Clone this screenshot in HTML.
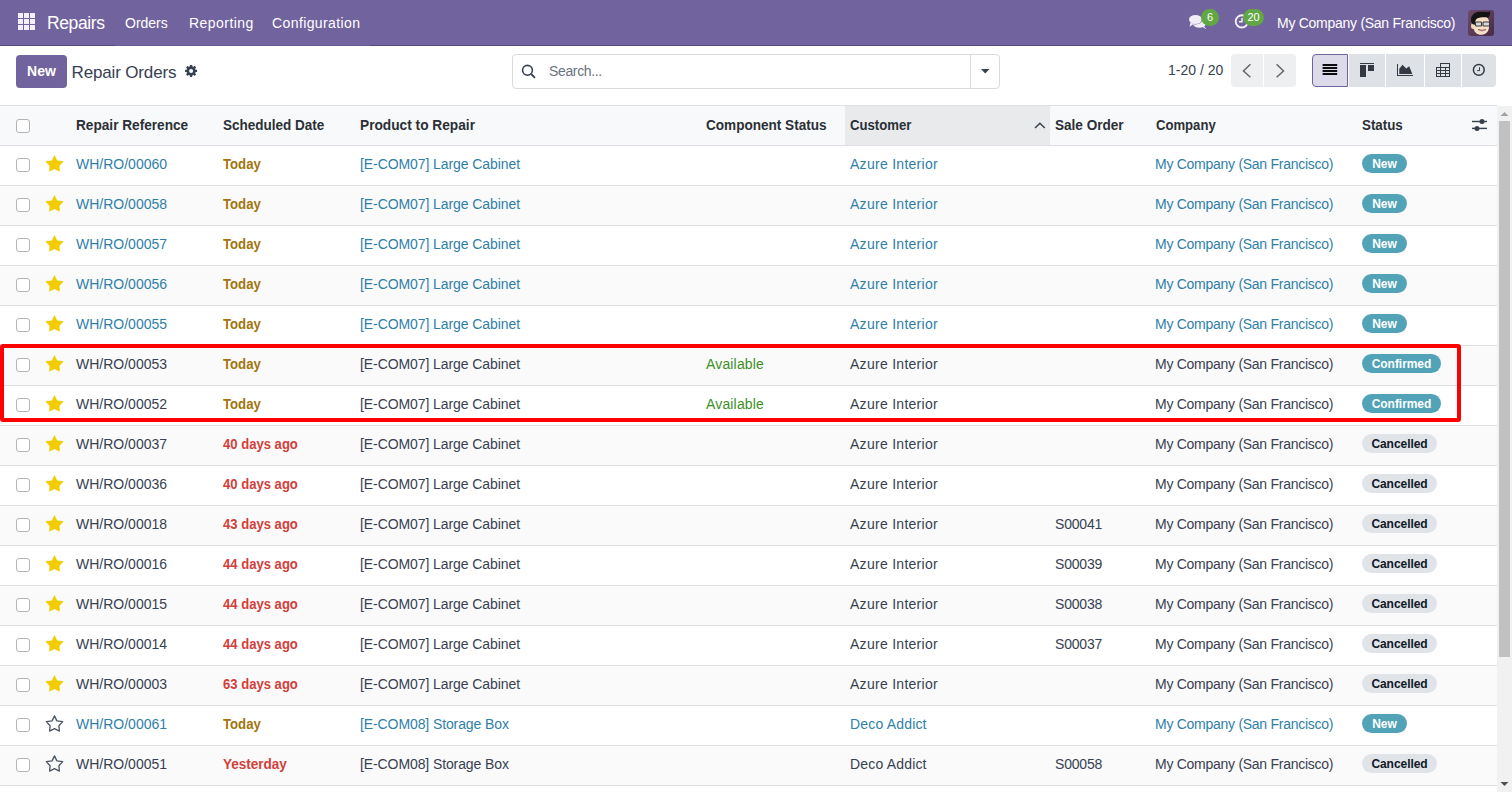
<!DOCTYPE html>
<html><head><meta charset="utf-8">
<style>
*{box-sizing:border-box;margin:0;padding:0}
html,body{width:1512px;height:792px;overflow:hidden;background:#fff;font-family:"Liberation Sans",sans-serif;font-size:14px;color:#374151}
.abs{position:absolute}
svg{display:block}
#nav{position:absolute;left:0;top:0;width:1512px;height:46px;background:#71639e;color:#fff}
#nav .line{position:absolute;top:45px;height:1px;background:#56497c}
#nav .t{position:absolute;white-space:nowrap;line-height:1}
.btnnew{position:absolute;left:16px;top:55px;width:51px;height:33px;background:#71639e;border-radius:4px;color:#fff;font-weight:bold;font-size:14px;text-align:center;line-height:33px}
.title{position:absolute;left:71.5px;top:63px;letter-spacing:-0.15px;font-size:17px;color:#374151;white-space:nowrap;line-height:1.2}
.search{position:absolute;left:512px;top:54px;width:488px;height:35px;border:1px solid #d8dadd;border-radius:4px}
.search .div{position:absolute;left:457px;top:0;width:1px;height:33px;background:#d8dadd}
.ph{position:absolute;left:36px;top:8px;color:#6b7280;font-size:14px;line-height:17px;letter-spacing:-0.35px}
.pager{position:absolute;left:1168px;top:62px;font-size:14px;color:#374151;line-height:17px;white-space:nowrap}
.pbtn{position:absolute;top:54px;height:33px;background:#eeeff1}
.vbtn{position:absolute;top:54px;height:33px;background:#dee1e6}
#thead{position:absolute;left:0;top:105px;width:1497px;height:41px;background:#f8f9fa;border-top:1px solid #dee2e6;border-bottom:1px solid #dee2e6}
.th{position:absolute;top:11px;font-weight:bold;color:#2b3036;white-space:nowrap;line-height:17px;font-size:14px;transform-origin:0 50%}
.row{position:absolute;left:0;width:1497px;height:40px;background:#fff;border-bottom:1px solid #dee2e6}
.row.alt{background:#fafafa}
.row .c{position:absolute;top:10px;white-space:nowrap;line-height:17px}
.row.info .c{color:#2f7fa9}
.row .c.date{font-weight:bold;transform-origin:0 50%}
.row .c.w{color:#a2760c}
.row .c.d{color:#d2403a}
.row .c.ok{color:#3e8f28}
.cb{position:absolute;left:16px;top:12px;width:14px;height:14px;border:1px solid #b1b5ba;border-radius:3px;background:#fff}
.star{position:absolute;left:45px;top:8px;width:20px;height:20px}
.bw{position:absolute;top:8px}
.badge{display:block;height:19px;border-radius:10px;font-weight:bold;font-size:12px;line-height:20px;text-align:center;letter-spacing:-0.05px}
.bi{background:#52a3b8;color:#fff}
.bc{background:#e0e3e7;color:#111827}
#scroll{position:absolute;left:1497px;top:106px;width:15px;height:686px;background:#f1f1f1}
#thumb{position:absolute;left:1499px;top:121px;width:11px;height:536px;background:#c1c1c1}
#redbox{position:absolute;left:0;top:344px;width:1461px;height:78px;border:4px solid #ff0000;border-radius:3px}
.nbadge{position:absolute;height:17px;border-radius:9px;background:#62a744;color:#fff;font-size:11px;line-height:17px;text-align:center}
</style></head><body>
<div id="nav">
  <svg class="abs" style="left:18px;top:13px" width="18" height="18" viewBox="0 0 18 18" fill="#f3f0fa">
    <rect x="0" y="0" width="5" height="5"/><rect x="6" y="0" width="5" height="5"/><rect x="12" y="0" width="5" height="5"/>
    <rect x="0" y="6" width="5" height="5"/><rect x="6" y="6" width="5" height="5"/><rect x="12" y="6" width="5" height="5"/>
    <rect x="0" y="12" width="5" height="5"/><rect x="6" y="12" width="5" height="5"/><rect x="12" y="12" width="5" height="5"/>
  </svg>
  <span class="t" style="left:47px;top:14.5px;font-size:17.5px;letter-spacing:-0.4px">Repairs</span>
  <span class="t" style="left:125px;top:16px">Orders</span>
  <span class="t" style="left:189px;top:16px;letter-spacing:0.45px">Reporting</span>
  <span class="t" style="left:272px;top:16px;letter-spacing:0.4px">Configuration</span>
  <!-- chat icon -->
  <svg class="abs" style="left:1188px;top:13px" width="20" height="18" viewBox="0 0 20 18">
    <ellipse cx="11.5" cy="10.5" rx="6.5" ry="4.3" fill="#f0edf7"/>
    <path d="M14 13.5 L18.5 16.5 L15.5 12.5 Z" fill="#f0edf7"/>
    <ellipse cx="7.5" cy="6.5" rx="7" ry="5" fill="#71639e"/>
    <ellipse cx="7.5" cy="6.5" rx="6.5" ry="4.6" fill="#f0edf7"/>
    <path d="M2.5 9.5 L1.5 13.8 L6 10.8 Z" fill="#f0edf7"/>
  </svg>
  <div class="nbadge" style="left:1201px;top:9px;width:18px">6</div>
  <!-- clock -->
  <svg class="abs" style="left:1234px;top:14px" width="16" height="16" viewBox="0 0 16 16">
    <circle cx="7.8" cy="7.4" r="6.1" fill="none" stroke="#f3f0fa" stroke-width="1.9"/>
    <path d="M8 4 V7.8 H5" fill="none" stroke="#f3f0fa" stroke-width="1.5"/>
  </svg>
  <div class="nbadge" style="left:1243px;top:9px;width:21px">20</div>
  <span class="t" style="left:1277px;top:16px;letter-spacing:-0.27px">My Company (San Francisco)</span>
  <!-- avatar -->
  <svg class="abs" style="left:1468px;top:10px" width="26" height="26" viewBox="0 0 26 26">
    <defs><linearGradient id="ag" x1="0" y1="0" x2="1" y2="1"><stop offset="0" stop-color="#6d4b69"/><stop offset="1" stop-color="#482b45"/></linearGradient></defs>
    <rect x="0" y="0" width="26" height="26" rx="3" fill="url(#ag)"/>
    <ellipse cx="5" cy="16" rx="2" ry="3" fill="#f2d6bb"/>
    <path d="M5.5 11 C5.5 7 9 6 13 6 C18 6 21 8 21 12 L21 17 C21 22 17 24.8 13 24.8 C9 24.8 5.5 22 5.5 17 Z" fill="#f6dfc6"/>
    <path d="M3 10 C3 4 8 1.5 13 1.8 C17 1.8 20 2.5 22 1.5 C22.5 4 21.5 6.5 20 7.5 C16 7 12 7.2 9 8.5 C7.5 9.5 7 12 6.8 15 L4.5 14 C3.5 12.5 3 11 3 10 Z" fill="#141414"/>
    <rect x="7.5" y="12" width="6" height="4" rx="0.8" fill="#d8d8d8" stroke="#3a3a3a" stroke-width="1.1"/>
    <rect x="15" y="12" width="6.5" height="4" rx="0.8" fill="#d8d8d8" stroke="#3a3a3a" stroke-width="1.1"/>
    <path d="M10 19.5 Q14 22.5 18 19.5 Q14 21 10 19.5 Z" fill="#fff" stroke="#8a4a4a" stroke-width="0.7"/>
  </svg>
  <div class="line" style="left:0;width:115px"></div>
  <div class="line" style="left:115px;width:255px;background:#6a5b98"></div>
  <div class="line" style="left:370px;width:1142px"></div>
</div>

<div class="btnnew">New</div>
<div class="title">Repair Orders</div>
<!-- gear -->
<svg class="abs" style="left:184px;top:64px" width="14" height="14" viewBox="0 0 14 14">
  <g fill="#374151" transform="translate(7.1,6.9)">
    <circle r="4.6"/>
    <rect x="-1.2" y="-6" width="2.4" height="12" rx="0.3"/>
    <rect x="-1.2" y="-6" width="2.4" height="12" rx="0.3" transform="rotate(45)"/>
    <rect x="-1.2" y="-6" width="2.4" height="12" rx="0.3" transform="rotate(90)"/>
    <rect x="-1.2" y="-6" width="2.4" height="12" rx="0.3" transform="rotate(135)"/>
    <circle r="2" fill="#fff"/>
  </g>
</svg>

<div class="search">
  <svg class="abs" style="left:8px;top:9px" width="16" height="16" viewBox="0 0 16 16">
    <circle cx="6.5" cy="6.3" r="4.9" fill="none" stroke="#374151" stroke-width="1.6"/>
    <path d="M10.2 10 L14 13.9" stroke="#374151" stroke-width="1.8"/>
  </svg>
  <div class="ph">Search...</div>
  <div class="div"></div>
  <svg class="abs" style="left:468px;top:14px" width="9" height="5" viewBox="0 0 9 5"><path d="M0 0 H8.5 L4.25 4.6 Z" fill="#374151"/></svg>
</div>

<div class="pager">1-20 / 20</div>
<div class="pbtn" style="left:1231px;width:32px;border-radius:4px 0 0 4px"></div>
<div class="pbtn" style="left:1264px;width:32px;border-radius:0 4px 4px 0"></div>
<svg class="abs" style="left:1242px;top:63px" width="10" height="16" viewBox="0 0 10 16"><path d="M8.4 1.3 L1.5 8 L8.4 14.3" fill="none" stroke="#666" stroke-width="1.5"/></svg>
<svg class="abs" style="left:1275px;top:63px" width="10" height="16" viewBox="0 0 10 16"><path d="M1.6 1.3 L8.5 8 L1.6 14.3" fill="none" stroke="#666" stroke-width="1.5"/></svg>

<div class="vbtn" style="left:1312px;width:36px;border-radius:4px 0 0 4px;background:#dddaea;border:1px solid #71639e"></div>
<div class="vbtn" style="left:1349px;width:36px"></div>
<div class="vbtn" style="left:1386px;width:38px"></div>
<div class="vbtn" style="left:1425px;width:36px"></div>
<div class="vbtn" style="left:1462px;width:34px;border-radius:0 4px 4px 0"></div>
<!-- list icon -->
<svg class="abs" style="left:1322px;top:64px" width="16" height="12" viewBox="0 0 16 12" fill="#0d0d0d">
  <rect x="0.6" y="0" width="14.6" height="2"/><rect x="0.6" y="3" width="14.6" height="2"/><rect x="0.6" y="6" width="14.6" height="2"/><rect x="0.6" y="9" width="14.6" height="2"/>
</svg>
<!-- kanban -->
<svg class="abs" style="left:1360px;top:62px" width="15" height="16" viewBox="0 0 15 16" fill="#333a44">
  <rect x="0" y="1" width="14" height="1"/><rect x="0" y="3" width="6" height="12"/><rect x="8" y="3" width="6" height="6"/>
</svg>
<!-- graph -->
<svg class="abs" style="left:1396px;top:63px" width="18" height="14" viewBox="0 0 18 14" fill="#333a44">
  <rect x="1" y="1" width="1" height="12"/><rect x="1" y="12" width="16" height="1"/>
  <path d="M3.3 11 L3.3 5.8 L6.5 1.8 L10.2 5.5 L13.2 3.3 L16.3 11 Z"/>
</svg>
<!-- pivot -->
<svg class="abs" style="left:1435px;top:62px" width="16" height="16" viewBox="0 0 16 16" fill="#333a44">
  <rect x="5" y="1" width="10" height="1"/>
  <rect x="1" y="5" width="14" height="1"/><rect x="1" y="8" width="14" height="1"/><rect x="1" y="11" width="14" height="1"/><rect x="1" y="14" width="14" height="1"/>
  <rect x="1" y="5" width="1" height="10"/><rect x="5" y="1" width="1" height="14"/><rect x="10" y="5" width="1" height="10"/><rect x="14" y="1" width="1" height="14"/>
</svg>
<!-- activity clock -->
<svg class="abs" style="left:1471px;top:62px" width="16" height="16" viewBox="0 0 16 16">
  <circle cx="7.8" cy="7.9" r="5.4" fill="none" stroke="#333a44" stroke-width="1.5"/>
  <path d="M8.5 5.3 V8.6 H6.1" fill="none" stroke="#333a44" stroke-width="1"/>
</svg>

<div id="thead">
  <span class="cb" style="top:13px"></span>
  <div class="abs" style="left:845px;top:0;width:205px;height:39px;background:#e9eaec"></div>
  <span class="th" style="left:76px;transform:scaleX(0.974)">Repair Reference</span>
  <span class="th" style="left:223px;transform:scaleX(0.964)">Scheduled Date</span>
  <span class="th" style="left:360px;transform:scaleX(0.979)">Product to Repair</span>
  <span class="th" style="left:706px;transform:scaleX(0.969)">Component Status</span>
  <span class="th" style="left:850px;transform:scaleX(0.939)">Customer</span>
  <span class="th" style="left:1055px;transform:scaleX(0.969)">Sale Order</span>
  <span class="th" style="left:1156px;transform:scaleX(0.936)">Company</span>
  <span class="th" style="left:1362px;transform:scaleX(0.953)">Status</span>
  <svg class="abs" style="left:1034px;top:16px" width="12" height="7" viewBox="0 0 12 7"><path d="M1 6 L5.9 1.2 L10.8 6" fill="none" stroke="#374151" stroke-width="1.5"/></svg>
  <svg class="abs" style="left:1471px;top:11px" width="17" height="14" viewBox="0 0 17 14" fill="#374151">
    <rect x="1" y="3.8" width="15" height="1.4"/><circle cx="11" cy="4.5" r="2.5"/>
    <rect x="1" y="10.7" width="15" height="1.4"/><circle cx="6" cy="11.4" r="2.5"/>
  </svg>
</div>

<div class="row info" style="top:146px"><span class="cb"></span><span class="star"><svg width="20" height="20" viewBox="0 0 20 20"><path d="M9.5 0.9 L12.2 6.5 L18.6 7.3 L14.4 11.9 L14.9 17.8 L9.5 15 L4.1 17.8 L4.6 11.9 L0.4 7.3 L6.8 6.5 Z" fill="#f3cc00"/></svg></span><span class="c" style="left:76px">WH/RO/00060</span><span class="c date w" style="left:223px;transform:scaleX(0.94)">Today</span><span class="c" style="left:360px;letter-spacing:-0.08px">[E-COM07] Large Cabinet</span><span class="c" style="left:850px;letter-spacing:0.28px">Azure Interior</span><span class="c" style="left:1155px;letter-spacing:-0.27px">My Company (San Francisco)</span><span class="bw" style="left:1362px"><span class="badge bi" style="width:45px">New</span></span></div>
<div class="row alt info" style="top:186px"><span class="cb"></span><span class="star"><svg width="20" height="20" viewBox="0 0 20 20"><path d="M9.5 0.9 L12.2 6.5 L18.6 7.3 L14.4 11.9 L14.9 17.8 L9.5 15 L4.1 17.8 L4.6 11.9 L0.4 7.3 L6.8 6.5 Z" fill="#f3cc00"/></svg></span><span class="c" style="left:76px">WH/RO/00058</span><span class="c date w" style="left:223px;transform:scaleX(0.94)">Today</span><span class="c" style="left:360px;letter-spacing:-0.08px">[E-COM07] Large Cabinet</span><span class="c" style="left:850px;letter-spacing:0.28px">Azure Interior</span><span class="c" style="left:1155px;letter-spacing:-0.27px">My Company (San Francisco)</span><span class="bw" style="left:1362px"><span class="badge bi" style="width:45px">New</span></span></div>
<div class="row info" style="top:226px"><span class="cb"></span><span class="star"><svg width="20" height="20" viewBox="0 0 20 20"><path d="M9.5 0.9 L12.2 6.5 L18.6 7.3 L14.4 11.9 L14.9 17.8 L9.5 15 L4.1 17.8 L4.6 11.9 L0.4 7.3 L6.8 6.5 Z" fill="#f3cc00"/></svg></span><span class="c" style="left:76px">WH/RO/00057</span><span class="c date w" style="left:223px;transform:scaleX(0.94)">Today</span><span class="c" style="left:360px;letter-spacing:-0.08px">[E-COM07] Large Cabinet</span><span class="c" style="left:850px;letter-spacing:0.28px">Azure Interior</span><span class="c" style="left:1155px;letter-spacing:-0.27px">My Company (San Francisco)</span><span class="bw" style="left:1362px"><span class="badge bi" style="width:45px">New</span></span></div>
<div class="row alt info" style="top:266px"><span class="cb"></span><span class="star"><svg width="20" height="20" viewBox="0 0 20 20"><path d="M9.5 0.9 L12.2 6.5 L18.6 7.3 L14.4 11.9 L14.9 17.8 L9.5 15 L4.1 17.8 L4.6 11.9 L0.4 7.3 L6.8 6.5 Z" fill="#f3cc00"/></svg></span><span class="c" style="left:76px">WH/RO/00056</span><span class="c date w" style="left:223px;transform:scaleX(0.94)">Today</span><span class="c" style="left:360px;letter-spacing:-0.08px">[E-COM07] Large Cabinet</span><span class="c" style="left:850px;letter-spacing:0.28px">Azure Interior</span><span class="c" style="left:1155px;letter-spacing:-0.27px">My Company (San Francisco)</span><span class="bw" style="left:1362px"><span class="badge bi" style="width:45px">New</span></span></div>
<div class="row info" style="top:306px"><span class="cb"></span><span class="star"><svg width="20" height="20" viewBox="0 0 20 20"><path d="M9.5 0.9 L12.2 6.5 L18.6 7.3 L14.4 11.9 L14.9 17.8 L9.5 15 L4.1 17.8 L4.6 11.9 L0.4 7.3 L6.8 6.5 Z" fill="#f3cc00"/></svg></span><span class="c" style="left:76px">WH/RO/00055</span><span class="c date w" style="left:223px;transform:scaleX(0.94)">Today</span><span class="c" style="left:360px;letter-spacing:-0.08px">[E-COM07] Large Cabinet</span><span class="c" style="left:850px;letter-spacing:0.28px">Azure Interior</span><span class="c" style="left:1155px;letter-spacing:-0.27px">My Company (San Francisco)</span><span class="bw" style="left:1362px"><span class="badge bi" style="width:45px">New</span></span></div>
<div class="row alt" style="top:346px"><span class="cb"></span><span class="star"><svg width="20" height="20" viewBox="0 0 20 20"><path d="M9.5 0.9 L12.2 6.5 L18.6 7.3 L14.4 11.9 L14.9 17.8 L9.5 15 L4.1 17.8 L4.6 11.9 L0.4 7.3 L6.8 6.5 Z" fill="#f3cc00"/></svg></span><span class="c" style="left:76px">WH/RO/00053</span><span class="c date w" style="left:223px;transform:scaleX(0.94)">Today</span><span class="c" style="left:360px;letter-spacing:-0.08px">[E-COM07] Large Cabinet</span><span class="c ok" style="left:706px;letter-spacing:0.16px">Available</span><span class="c" style="left:850px;letter-spacing:0.28px">Azure Interior</span><span class="c" style="left:1155px;letter-spacing:-0.27px">My Company (San Francisco)</span><span class="bw" style="left:1362px"><span class="badge bi" style="width:79px">Confirmed</span></span></div>
<div class="row" style="top:386px"><span class="cb"></span><span class="star"><svg width="20" height="20" viewBox="0 0 20 20"><path d="M9.5 0.9 L12.2 6.5 L18.6 7.3 L14.4 11.9 L14.9 17.8 L9.5 15 L4.1 17.8 L4.6 11.9 L0.4 7.3 L6.8 6.5 Z" fill="#f3cc00"/></svg></span><span class="c" style="left:76px">WH/RO/00052</span><span class="c date w" style="left:223px;transform:scaleX(0.94)">Today</span><span class="c" style="left:360px;letter-spacing:-0.08px">[E-COM07] Large Cabinet</span><span class="c ok" style="left:706px;letter-spacing:0.16px">Available</span><span class="c" style="left:850px;letter-spacing:0.28px">Azure Interior</span><span class="c" style="left:1155px;letter-spacing:-0.27px">My Company (San Francisco)</span><span class="bw" style="left:1362px"><span class="badge bi" style="width:79px">Confirmed</span></span></div>
<div class="row alt" style="top:426px"><span class="cb"></span><span class="star"><svg width="20" height="20" viewBox="0 0 20 20"><path d="M9.5 0.9 L12.2 6.5 L18.6 7.3 L14.4 11.9 L14.9 17.8 L9.5 15 L4.1 17.8 L4.6 11.9 L0.4 7.3 L6.8 6.5 Z" fill="#f3cc00"/></svg></span><span class="c" style="left:76px">WH/RO/00037</span><span class="c date d" style="left:223px;transform:scaleX(0.934)">40 days ago</span><span class="c" style="left:360px;letter-spacing:-0.08px">[E-COM07] Large Cabinet</span><span class="c" style="left:850px;letter-spacing:0.28px">Azure Interior</span><span class="c" style="left:1155px;letter-spacing:-0.27px">My Company (San Francisco)</span><span class="bw" style="left:1362px"><span class="badge bc" style="width:75px">Cancelled</span></span></div>
<div class="row" style="top:466px"><span class="cb"></span><span class="star"><svg width="20" height="20" viewBox="0 0 20 20"><path d="M9.5 0.9 L12.2 6.5 L18.6 7.3 L14.4 11.9 L14.9 17.8 L9.5 15 L4.1 17.8 L4.6 11.9 L0.4 7.3 L6.8 6.5 Z" fill="#f3cc00"/></svg></span><span class="c" style="left:76px">WH/RO/00036</span><span class="c date d" style="left:223px;transform:scaleX(0.934)">40 days ago</span><span class="c" style="left:360px;letter-spacing:-0.08px">[E-COM07] Large Cabinet</span><span class="c" style="left:850px;letter-spacing:0.28px">Azure Interior</span><span class="c" style="left:1155px;letter-spacing:-0.27px">My Company (San Francisco)</span><span class="bw" style="left:1362px"><span class="badge bc" style="width:75px">Cancelled</span></span></div>
<div class="row alt" style="top:506px"><span class="cb"></span><span class="star"><svg width="20" height="20" viewBox="0 0 20 20"><path d="M9.5 0.9 L12.2 6.5 L18.6 7.3 L14.4 11.9 L14.9 17.8 L9.5 15 L4.1 17.8 L4.6 11.9 L0.4 7.3 L6.8 6.5 Z" fill="#f3cc00"/></svg></span><span class="c" style="left:76px">WH/RO/00018</span><span class="c date d" style="left:223px;transform:scaleX(0.934)">43 days ago</span><span class="c" style="left:360px;letter-spacing:-0.08px">[E-COM07] Large Cabinet</span><span class="c" style="left:850px;letter-spacing:0.28px">Azure Interior</span><span class="c" style="left:1055px;letter-spacing:-0.2px">S00041</span><span class="c" style="left:1155px;letter-spacing:-0.27px">My Company (San Francisco)</span><span class="bw" style="left:1362px"><span class="badge bc" style="width:75px">Cancelled</span></span></div>
<div class="row" style="top:546px"><span class="cb"></span><span class="star"><svg width="20" height="20" viewBox="0 0 20 20"><path d="M9.5 0.9 L12.2 6.5 L18.6 7.3 L14.4 11.9 L14.9 17.8 L9.5 15 L4.1 17.8 L4.6 11.9 L0.4 7.3 L6.8 6.5 Z" fill="#f3cc00"/></svg></span><span class="c" style="left:76px">WH/RO/00016</span><span class="c date d" style="left:223px;transform:scaleX(0.934)">44 days ago</span><span class="c" style="left:360px;letter-spacing:-0.08px">[E-COM07] Large Cabinet</span><span class="c" style="left:850px;letter-spacing:0.28px">Azure Interior</span><span class="c" style="left:1055px;letter-spacing:-0.2px">S00039</span><span class="c" style="left:1155px;letter-spacing:-0.27px">My Company (San Francisco)</span><span class="bw" style="left:1362px"><span class="badge bc" style="width:75px">Cancelled</span></span></div>
<div class="row alt" style="top:586px"><span class="cb"></span><span class="star"><svg width="20" height="20" viewBox="0 0 20 20"><path d="M9.5 0.9 L12.2 6.5 L18.6 7.3 L14.4 11.9 L14.9 17.8 L9.5 15 L4.1 17.8 L4.6 11.9 L0.4 7.3 L6.8 6.5 Z" fill="#f3cc00"/></svg></span><span class="c" style="left:76px">WH/RO/00015</span><span class="c date d" style="left:223px;transform:scaleX(0.934)">44 days ago</span><span class="c" style="left:360px;letter-spacing:-0.08px">[E-COM07] Large Cabinet</span><span class="c" style="left:850px;letter-spacing:0.28px">Azure Interior</span><span class="c" style="left:1055px;letter-spacing:-0.2px">S00038</span><span class="c" style="left:1155px;letter-spacing:-0.27px">My Company (San Francisco)</span><span class="bw" style="left:1362px"><span class="badge bc" style="width:75px">Cancelled</span></span></div>
<div class="row" style="top:626px"><span class="cb"></span><span class="star"><svg width="20" height="20" viewBox="0 0 20 20"><path d="M9.5 0.9 L12.2 6.5 L18.6 7.3 L14.4 11.9 L14.9 17.8 L9.5 15 L4.1 17.8 L4.6 11.9 L0.4 7.3 L6.8 6.5 Z" fill="#f3cc00"/></svg></span><span class="c" style="left:76px">WH/RO/00014</span><span class="c date d" style="left:223px;transform:scaleX(0.934)">44 days ago</span><span class="c" style="left:360px;letter-spacing:-0.08px">[E-COM07] Large Cabinet</span><span class="c" style="left:850px;letter-spacing:0.28px">Azure Interior</span><span class="c" style="left:1055px;letter-spacing:-0.2px">S00037</span><span class="c" style="left:1155px;letter-spacing:-0.27px">My Company (San Francisco)</span><span class="bw" style="left:1362px"><span class="badge bc" style="width:75px">Cancelled</span></span></div>
<div class="row alt" style="top:666px"><span class="cb"></span><span class="star"><svg width="20" height="20" viewBox="0 0 20 20"><path d="M9.5 0.9 L12.2 6.5 L18.6 7.3 L14.4 11.9 L14.9 17.8 L9.5 15 L4.1 17.8 L4.6 11.9 L0.4 7.3 L6.8 6.5 Z" fill="#f3cc00"/></svg></span><span class="c" style="left:76px">WH/RO/00003</span><span class="c date d" style="left:223px;transform:scaleX(0.934)">63 days ago</span><span class="c" style="left:360px;letter-spacing:-0.08px">[E-COM07] Large Cabinet</span><span class="c" style="left:850px;letter-spacing:0.28px">Azure Interior</span><span class="c" style="left:1155px;letter-spacing:-0.27px">My Company (San Francisco)</span><span class="bw" style="left:1362px"><span class="badge bc" style="width:75px">Cancelled</span></span></div>
<div class="row info" style="top:706px"><span class="cb"></span><span class="star"><svg width="20" height="20" viewBox="0 0 20 20"><path d="M9.5 0.9 L12.2 6.5 L18.6 7.3 L14.4 11.9 L14.9 17.8 L9.5 15 L4.1 17.8 L4.6 11.9 L0.4 7.3 L6.8 6.5 Z" transform="translate(9.5 10.5) scale(0.9) translate(-9.5 -10.5)" fill="none" stroke="#4b5563" stroke-width="1.45" stroke-linejoin="round"/></svg></span><span class="c" style="left:76px">WH/RO/00061</span><span class="c date w" style="left:223px;transform:scaleX(0.94)">Today</span><span class="c" style="left:360px;letter-spacing:-0.1px">[E-COM08] Storage Box</span><span class="c" style="left:850px;letter-spacing:0.18px">Deco Addict</span><span class="c" style="left:1155px;letter-spacing:-0.27px">My Company (San Francisco)</span><span class="bw" style="left:1362px"><span class="badge bi" style="width:45px">New</span></span></div>
<div class="row alt" style="top:746px"><span class="cb"></span><span class="star"><svg width="20" height="20" viewBox="0 0 20 20"><path d="M9.5 0.9 L12.2 6.5 L18.6 7.3 L14.4 11.9 L14.9 17.8 L9.5 15 L4.1 17.8 L4.6 11.9 L0.4 7.3 L6.8 6.5 Z" transform="translate(9.5 10.5) scale(0.9) translate(-9.5 -10.5)" fill="none" stroke="#4b5563" stroke-width="1.45" stroke-linejoin="round"/></svg></span><span class="c" style="left:76px">WH/RO/00051</span><span class="c date d" style="left:223px;transform:scaleX(0.965)">Yesterday</span><span class="c" style="left:360px;letter-spacing:-0.1px">[E-COM08] Storage Box</span><span class="c" style="left:850px;letter-spacing:0.18px">Deco Addict</span><span class="c" style="left:1055px;letter-spacing:-0.2px">S00058</span><span class="c" style="left:1155px;letter-spacing:-0.27px">My Company (San Francisco)</span><span class="bw" style="left:1362px"><span class="badge bc" style="width:75px">Cancelled</span></span></div>

<div id="scroll"></div>
<div id="thumb"></div>
<svg class="abs" style="left:1500px;top:111px" width="9" height="6" viewBox="0 0 9 6"><path d="M0.5 5 L4.5 1 L8.5 5 Z" fill="#a3a3a3"/></svg>
<svg class="abs" style="left:1500px;top:781px" width="9" height="6" viewBox="0 0 9 6"><path d="M0.5 1 L4.5 5 L8.5 1 Z" fill="#505050"/></svg>
<div id="redbox"></div>
</body></html>
